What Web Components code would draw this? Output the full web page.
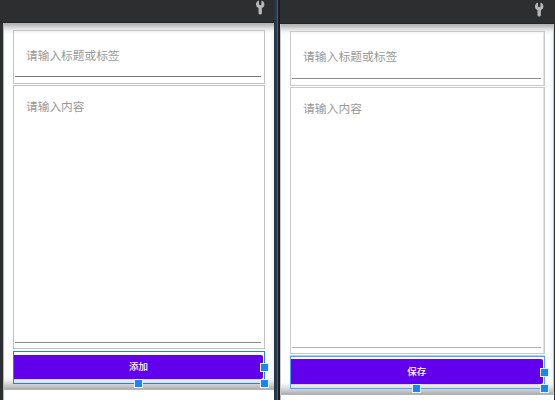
<!DOCTYPE html>
<html lang="zh-CN">
<head>
<meta charset="utf-8">
<title>Layout preview</title>
<style>
html,body{margin:0;background:#fff}
body{width:555px;height:400px;overflow:hidden;font-family:"Noto Sans CJK SC",sans-serif}
</style>
</head>
<body>
<editor-workspace>
  <device-preview>
    <hint-field hint="请输入标题或标签"></hint-field>
    <hint-field hint="请输入内容" multiline></hint-field>
    <selected-button>添加</selected-button>
  </device-preview>
  <pane-divider></pane-divider>
  <device-preview variant="second">
    <hint-field hint="请输入标题或标签"></hint-field>
    <hint-field hint="请输入内容" multiline></hint-field>
    <selected-button>保存</selected-button>
  </device-preview>
</editor-workspace>
<script>
const define = (name, html, setup) => {
  const t = document.createElement('template');
  t.innerHTML = html;
  customElements.define(name, class extends HTMLElement {
    constructor() {
      super();
      this.attachShadow({mode: 'open'}).append(t.content.cloneNode(true));
    }
    connectedCallback() { if (setup) setup(this); }
  });
};

define('editor-workspace', `
<style>
:host{display:grid;grid-template-columns:274px 6px 275px;width:555px;height:400px;background:#2d2e30}
</style><slot></slot>`);

define('wrench-icon', `
<style>:host{display:block;width:9px;height:15px}svg{display:block}</style>
<svg width="9" height="15" viewBox="0 0 9 15"><path fill="#b4b6b8" d="M2.1 .8 L3 .8 L3 4.4 L4.2 5.2 L5.4 4.4 L5.4 .8 L6.3 .8 C7.6 1.6 8.4 2.9 8.4 4.5 C8.4 6.2 7.4 7.4 5.9 8.1 L5.9 13.3 Q5.9 14.6 4.2 14.6 Q2.5 14.6 2.5 13.3 L2.5 8.1 C1 7.4 0 6.2 0 4.5 C0 2.9 .8 1.6 2.1 .8Z"/></svg>`);

define('pane-divider', `
<style>:host{display:block;background:linear-gradient(90deg,#263342 0 1px,#263b50 1px 3px,#34608f 3px 4px,#202225 4px 5px,#18191b 5px)}</style>`);

define('device-preview', `
<style>
:host{display:grid;box-sizing:border-box;height:400px;grid-template:23px 367px 10px / 3px 271px;background:#2d2e30;
 --title-h:54px;--body-h:264px;--fs:11.7px;--title-line:#777;--body-line:#8c8c8c;
 --sel:#1a84ee;--halo:transparent;--bc:#c2c2c2;--soft:transparent;--btn:24px;--btn-top:3px}
:host([variant=second]){grid-template:24px 371px 5px / 0 274px 1px;
 --title-h:55px;--body-h:267px;--fs:11.8px;--title-line:#8c8c8c;--body-line:#b3b3b3;
 --sel:#4ca4fb;--halo:#a6d2ff;--bc:#c9c9c9;--soft:#e2e2e2;--btn:25px;--btn-top:2px}
header{grid-column:1/-1;grid-row:1;display:flex;justify-content:flex-end;padding-right:9px;border-bottom:1px solid #242527;box-sizing:border-box}
:host([variant=second]) header{padding:1.5px 10.6px 0 0}
main{grid-column:2;grid-row:2;box-sizing:border-box;display:flex;flex-direction:column;gap:1px;padding:7px 9px 0 9px;
 border-left:1px solid #b5b7b9;
 background:linear-gradient(#b2b2b2,#bcbcbc 2px,#ddd 5px,#f4f4f4 8px,#fff0 11px) top/100% 12px no-repeat,
 linear-gradient(#fff0,#f1f1f1 3px,#c7c7c7 9px,#adadad 12px,#bbb) bottom/100% 13px no-repeat,
 linear-gradient(90deg,#fff calc(100% - 4px),#eef5f8)}
:host([variant=second]) main{padding:7px 8.5px 0 9px;border-left:1px solid #c7c9ca;border-right:1px solid #c8c8c8}
footer{grid-column:2;grid-row:3;background:#fff;border-left:1px solid #b5b7b9}
</style>
<header><wrench-icon></wrench-icon></header><main><slot></slot></main><footer></footer>`);

define('hint-field', `
<style>
:host{display:flex;flex-direction:column;flex:none;box-sizing:border-box;height:var(--title-h);border:1px solid var(--bc);padding:16px 3px 6px 1px;box-shadow:inset -1px 0 var(--soft)}
:host([multiline]){height:var(--body-h);padding:12px 3px 5px 1px}
.hint{padding-left:11px;font-size:var(--fs);line-height:16px;color:#999;white-space:nowrap}
.line{margin-top:auto;height:1px;background:var(--title-line)}
:host([multiline]) .line{background:var(--body-line)}
</style>
<div class="hint"></div><div class="line"></div>`,
el => el.shadowRoot.querySelector('.hint').textContent = el.getAttribute('hint'));

define('selected-button', `
<style>
:host{display:block;flex:none;position:relative;box-sizing:border-box;height:33px;margin-top:1px;border:1px solid var(--sel);padding:var(--btn-top) 1px 0 0;background:linear-gradient(#fff 0 26px,#fff0 28px);box-shadow:0 -1px var(--halo)}
button{display:flex;align-items:center;justify-content:center;box-sizing:border-box;width:100%;height:var(--btn);border:0;border-radius:0 2px 2px 0;padding:0 0 2px;background:#6200ee;color:#fff;font:500 9.5px "Noto Sans CJK SC",sans-serif;box-shadow:0 1px 1px #8885}
i{position:absolute;box-sizing:border-box;width:9px;height:9px;background:#1886f7;border:1px solid #e6f3ff}
.s{left:calc(50% - 5px);bottom:-5px}.e{right:-5px;top:11px}.c{right:-5px;bottom:-5px}
</style>
<button><slot></slot></button><i class="s"></i><i class="e"></i><i class="c"></i>`);
</script>
</body>
</html>
